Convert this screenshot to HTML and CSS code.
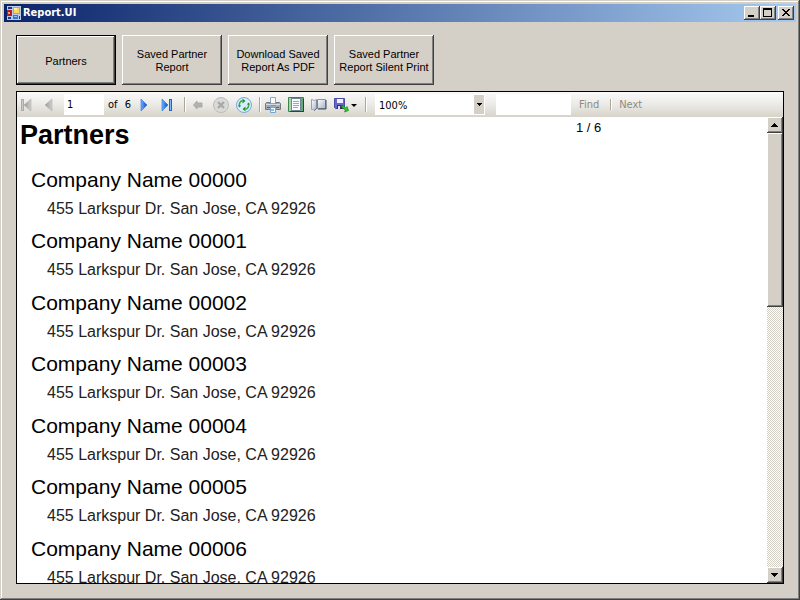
FILE: index.html
```html
<!DOCTYPE html>
<html lang="en">
<head>
<meta charset="utf-8">
<title>Report.UI</title>
<link rel="stylesheet" href="styles.css">
</head>
<body>
<div class="window">
  <header class="titlebar">
    <svg class="app-icon" width="14" height="14" viewBox="0 0 14 14" aria-hidden="true" shape-rendering="crispEdges">
      <rect width="14" height="14" fill="#b9cbe9"/>
      <path d="M1 1h4v2H1zM1 11h3v2H1zM12 10h1v3h-1z" fill="#1c3980"/>
      <path d="M0 4h5v6H0z" fill="#b91d1d"/><path d="M1 6h2v2H1z" fill="#f49a86"/>
      <path d="M6 1h7v7H6z" fill="#dda51c"/><path d="M7 2h5v5H7z" fill="#ffd65c"/><path d="M7 2h3v2H7z" fill="#fff0ad"/>
      <path d="M6 9h5v4H6z" fill="#3477da"/><path d="M7 10h3v1H7z" fill="#8fc1ff"/>
    </svg>
    <h1 class="caption">Report.UI</h1>
    <button class="sys" type="button" aria-label="Minimize"><svg width="12" height="10" shape-rendering="crispEdges"><path d="M2 7h6v2H2z"/></svg></button>
    <button class="sys" type="button" aria-label="Maximize"><svg width="12" height="10" shape-rendering="crispEdges"><path d="M1 0h9v9H1zM2 2v6h7V2z" fill-rule="evenodd"/></svg></button>
    <button class="sys close" type="button" aria-label="Close"><svg width="12" height="10" shape-rendering="crispEdges"><path d="M2 1h2v1h1v1h2V2h1V1h2v1H9v1H8v1H7v1h1v1h1v1h1v1H8V7H7V6H5v1H4v1H2V7h1V6h1V5h1V4H4V3H3V2H2z"/></svg></button>
  </header>

  <main class="client">
    <div class="actions">
      <button class="action default" type="button">Partners</button>
      <button class="action" type="button">Saved Partner<br>Report</button>
      <button class="action" type="button">Download Saved<br>Report As PDF</button>
      <button class="action" type="button">Saved Partner<br>Report Silent Print</button>
    </div>

    <section class="viewer">
      <div class="toolbar">
        <svg width="0" height="0" class="defs" aria-hidden="true">
          <linearGradient id="blue" x1="0" x2="1"><stop offset="0" stop-color="#6db5ff"/><stop offset="1" stop-color="#0744c8"/></linearGradient>
          <linearGradient id="grey" x1="0" x2="1"><stop offset="0" stop-color="#999"/><stop offset="1" stop-color="#cfcfcf"/></linearGradient>
        </svg>
        <button class="tool" type="button" disabled aria-label="First Page"><svg width="23" height="16"><path d="M4 2h3v12H4z" fill="#ababab"/><path d="M5 3h1v10H5z" fill="#c8c8c8"/><path d="M14 2v12L7 8z" fill="url(#grey)" stroke="#aaa" stroke-width=".5"/></svg></button>
        <button class="tool" type="button" disabled aria-label="Previous Page"><svg width="23" height="16"><path d="M12 2v12L5 8z" fill="url(#grey)" stroke="#aaa" stroke-width=".5"/></svg></button>
        <input class="box page" type="text" value="1" aria-label="Current page">
        <span class="count"><span>of</span><span>6</span></span>
        <button class="tool" type="button" aria-label="Next Page"><svg width="23" height="16"><path d="M8 2v12l6-6z" fill="url(#blue)" stroke="#2a6fe0" stroke-width=".6"/></svg></button>
        <button class="tool" type="button" aria-label="Last Page"><svg width="23" height="16"><path d="M6 2v12l6-6z" fill="url(#blue)" stroke="#2a6fe0" stroke-width=".6"/><path d="M13 2h3v12h-3z" fill="#1f62dc"/><path d="M14 3h1v10h-1z" fill="#7fbaff"/></svg></button>
        <span class="sep wide"></span>
        <button class="tool" type="button" disabled aria-label="Back"><svg width="23" height="16"><path d="M6.500 8L10 4v2h5v4h-5v2z" fill="#b2b2b0" stroke="#a2a2a0" stroke-width=".8"/></svg></button>
        <button class="tool" type="button" disabled aria-label="Stop"><svg width="23" height="16"><circle cx="11" cy="8" r="7.500" fill="#dadad8" stroke="#bcbcba"/><path d="M8 5l6 6m0-6l-6 6" stroke="#a8a8a6" stroke-width="2.400"/></svg></button>
        <button class="tool" type="button" aria-label="Refresh"><svg width="23" height="16"><circle cx="11" cy="8" r="7.500" fill="#d9edfd" stroke="#78a9df"/><path d="M6.500 9C6 6.500 7 4 9.500 3.800M15.500 7c.5 2.500-.5 5-3 5.200" fill="none" stroke="#35aa45" stroke-width="1.500"/><path d="M9.500 1.500l3 2.500-3 2.500zM12.500 9.500l-3 2.500 3 2.500zM4.800 8.500h3.400l-1.700 2zM13.800 7.500h3.400l-1.700-2z" fill="#209332"/></svg></button>
        <span class="sep"></span>
        <button class="tool" type="button" aria-label="Print"><svg width="23" height="16"><path d="M8.500 .5h5v6h-5z" fill="#f6fbff" stroke="#8aa9c8"/><path d="M4.500 5.500H8V8h6V5.500h3.500l1 1v6h-15v-6z" fill="#a4a9b2" stroke="#727985"/><path d="M4 7h14v1H4z" fill="#d6dae1"/><path d="M5 10h12v1H5z" fill="#5a606c"/><path d="M14 8h2v1h-2z" fill="#63d7f4"/><path d="M8.500 10.500h5v5h-5z" fill="#eef9ff" stroke="#72a7d5"/><path d="M9 12h3v2H9z" fill="#78c5f4"/></svg></button>
        <button class="tool" type="button" aria-label="Print Layout"><svg width="23" height="16"><path d="M3.500 .5h15v14h-15z" fill="#67a679" stroke="#3a8450"/><path d="M4 1h2v13H4z" fill="#a8d3ae"/><path d="M6.500 1.500h9v12h-9z" fill="#fafcff" stroke="#6b8794"/><path d="M8 4.500h6M8 6.500h6M8 8.500h6M8 10.500h5" stroke="#8fa8cb"/><path d="M18 2h1v13H5v-1h13z" fill="#204d31"/></svg></button>
        <button class="tool" type="button" aria-label="Page Setup"><svg width="23" height="16"><defs><linearGradient id="sheet" x1="0" x2="1" y2="1"><stop offset="0" stop-color="#fff"/><stop offset="1" stop-color="#a3b2ca"/></linearGradient></defs><path d="M3.500 2.500l3 1 2-1v8l-2 3-1-1h-2z" fill="url(#sheet)" stroke="#98a1af"/><path d="M9.500 2.500h8v9h-8z" fill="url(#sheet)" stroke="#8993a4"/><path d="M18 3v9h-8" fill="none" stroke="#414b5d"/><path d="M9 3v8l-3 3" fill="none" stroke="#6b7485"/></svg></button>
        <button class="tool export" type="button" aria-label="Export"><svg width="30" height="16"><path d="M3.500 1.500h10v10h-9l-1-1z" fill="#6a66cc" stroke="#4f4aa8"/><path d="M6 2h6v4H6z" fill="#eef0ff"/><path d="M6 8h6v4H6z" fill="#33315e"/><path d="M7 9h2v3H7z" fill="#dce2f7"/><path d="M10 8.500l2.500.5 2 2 1.500-1.500 1.500 4-4 1.500 1-2-3-2z" fill="#35c52d" stroke="#168620" stroke-width=".7"/><path d="M20 7h6l-3 3z"/></svg></button>
        <span class="sep last"></span>
        <span class="zoom"><select class="box" aria-label="Zoom"><option>100%</option></select><svg class="drop" width="10" height="19" shape-rendering="crispEdges"><path d="M3 8h5v1H7v1H6v1H5v-1H4V9H3z"/></svg></span>
        <input class="box search" type="text" aria-label="Find text in report">
        <button class="link" type="button" disabled>Find</button>
        <span class="sep find-sep"></span>
        <button class="link" type="button" disabled>Next</button>
      </div>

      <div class="document">
        <article class="report">
          <div class="heading"><h2>Partners</h2><span class="pages">1 / 6</span></div>
          <ul class="partners">
            <li><h3>Company Name 00000</h3><p>455 Larkspur Dr. San Jose, CA 92926</p></li>
            <li><h3>Company Name 00001</h3><p>455 Larkspur Dr. San Jose, CA 92926</p></li>
            <li><h3>Company Name 00002</h3><p>455 Larkspur Dr. San Jose, CA 92926</p></li>
            <li><h3>Company Name 00003</h3><p>455 Larkspur Dr. San Jose, CA 92926</p></li>
            <li><h3>Company Name 00004</h3><p>455 Larkspur Dr. San Jose, CA 92926</p></li>
            <li><h3>Company Name 00005</h3><p>455 Larkspur Dr. San Jose, CA 92926</p></li>
            <li><h3>Company Name 00006</h3><p>455 Larkspur Dr. San Jose, CA 92926</p></li>
          </ul>
        </article>
        <div class="scrollbar">
          <button class="arrow" type="button" aria-label="Scroll up"><svg width="8" height="4" shape-rendering="crispEdges"><path d="M3 0h1v1h1v1h1v1h1v1H0V3h1V2h1V1h1z"/></svg></button>
          <div class="thumb"></div>
          <div class="track"></div>
          <button class="arrow" type="button" aria-label="Scroll down"><svg width="8" height="4" shape-rendering="crispEdges"><path d="M0 0h7v1H6v1H5v1H4v1H3V3H2V2H1V1H0z"/></svg></button>
        </div>
      </div>
    </section>
  </main>
</div>
</body>
</html>
```
FILE: styles.css
```css
* { box-sizing: border-box; }

body, h1, h2, h3, p, ul { margin: 0; padding: 0; }

body {
  color: #000;
  background: #d4d0c8;
  font: 11px/13px "Liberation Sans", Arial, sans-serif;
}

button, input, select { font: inherit; color: inherit; margin: 0; border-radius: 0; }
svg { display: block; flex: none; }

.window {
  display: flex;
  flex-direction: column;
  height: 100vh;
  padding: 4px;
  box-shadow: inset -1px -1px #404040, inset 1px 1px #d4d0c8, inset -2px -2px #808080, inset 2px 2px #fff;
}

.titlebar {
  display: flex;
  align-items: center;
  height: 18px;
  padding: 0 2px 0 3px;
  background: linear-gradient(to right, #0a246a, #a6caf0);
}

.caption {
  flex: 1;
  margin-left: 2px;
  color: #fff;
  font: bold 11px/16px "DejaVu Sans Condensed", "DejaVu Sans", sans-serif;
}

.sys, .action, .arrow, .thumb {
  background: #d4d0c8;
  border: 0;
  box-shadow: inset -1px -1px #404040, inset 1px 1px #fff, inset -2px -2px #808080;
}

.sys { width: 16px; height: 14px; padding: 2px; }
.close { margin-left: 2px; }

.client {
  display: flex;
  flex: 1;
  flex-direction: column;
  gap: 6px;
  min-height: 0;
  padding: 13px 12px 12px;
}

.actions { display: flex; gap: 6px; }
.action { width: 100px; height: 50px; padding: 2px 0 0; white-space: nowrap; }
.default { border: 1px solid #000; }

.viewer {
  display: flex;
  flex: 1;
  flex-direction: column;
  min-height: 0;
  border: 1px solid #000;
  background: #fff;
}

.toolbar {
  display: flex;
  flex: none;
  align-items: center;
  height: 25px;
  background: linear-gradient(#fafaf9, #ebeae6 50%, #d6d3ca);
  font: 11px/13px "DejaVu Sans Condensed", "DejaVu Sans", sans-serif;
}

.defs { position: absolute; }
.tool { flex: none; width: 23px; height: 21px; padding: 0; border: 0; background: none; }
.export { width: 30px; }

.box { height: 21px; padding: 0 3px; border: 0; background: #fff; }
.page { width: 40px; margin-left: 1px; }
.count { display: flex; justify-content: space-between; width: 29px; padding: 0 2px 0 4px; }

.sep { flex: none; width: 6px; height: 15px; background: linear-gradient(to right, #aca899 1px, #fff 1px) 3px 0 / 2px 15px no-repeat; }
.wide { width: 8px; background-position: 5px 0; }
.last { width: 14px; background-position: 4px 0; }

.zoom { position: relative; flex: none; width: 110px; margin-right: 11px; }
.zoom select { display: block; width: 100%; padding: 1px 4px 0; appearance: none; }
.drop { position: absolute; top: 1px; right: 1px; background: #d4d0c8; pointer-events: none; }
.search { width: 75px; margin-right: 8px; }
.link { padding: 0; border: 0; background: none; color: #8c8a84; }
.find-sep { width: 19px; height: 11px; margin-left: 1px; background-position: 10px 0; background-size: 2px 11px; }

.document { display: flex; flex: 1; min-height: 0; }
.report { flex: 1; min-width: 0; overflow: hidden; }
.heading { display: grid; grid-template-columns: 556px 1fr; padding: 2px 0 0 3px; }
.heading h2 { font: bold 27px/32px "Liberation Sans", Arial, sans-serif; }
.pages { font-size: 13px; line-height: 18px; }

.partners { margin-top: 14px; padding-left: 14px; list-style: none; }
.partners li:nth-child(even) { padding-bottom: 1px; }
.partners h3 { font-size: 21px; font-weight: normal; line-height: 30px; }
.partners p { padding: 0 0 3px 16px; color: #222; font-size: 16px; line-height: 28px; }

.scrollbar { display: flex; flex: none; flex-direction: column; width: 16px; }
.arrow { display: grid; place-items: center; flex: none; width: 16px; height: 16px; padding: 0; }
.thumb { flex: 2; }
.track { flex: 3; background: repeating-conic-gradient(#fff 0 25%, #d4d0c8 0 50%) 0 0 / 2px 2px; }
```
